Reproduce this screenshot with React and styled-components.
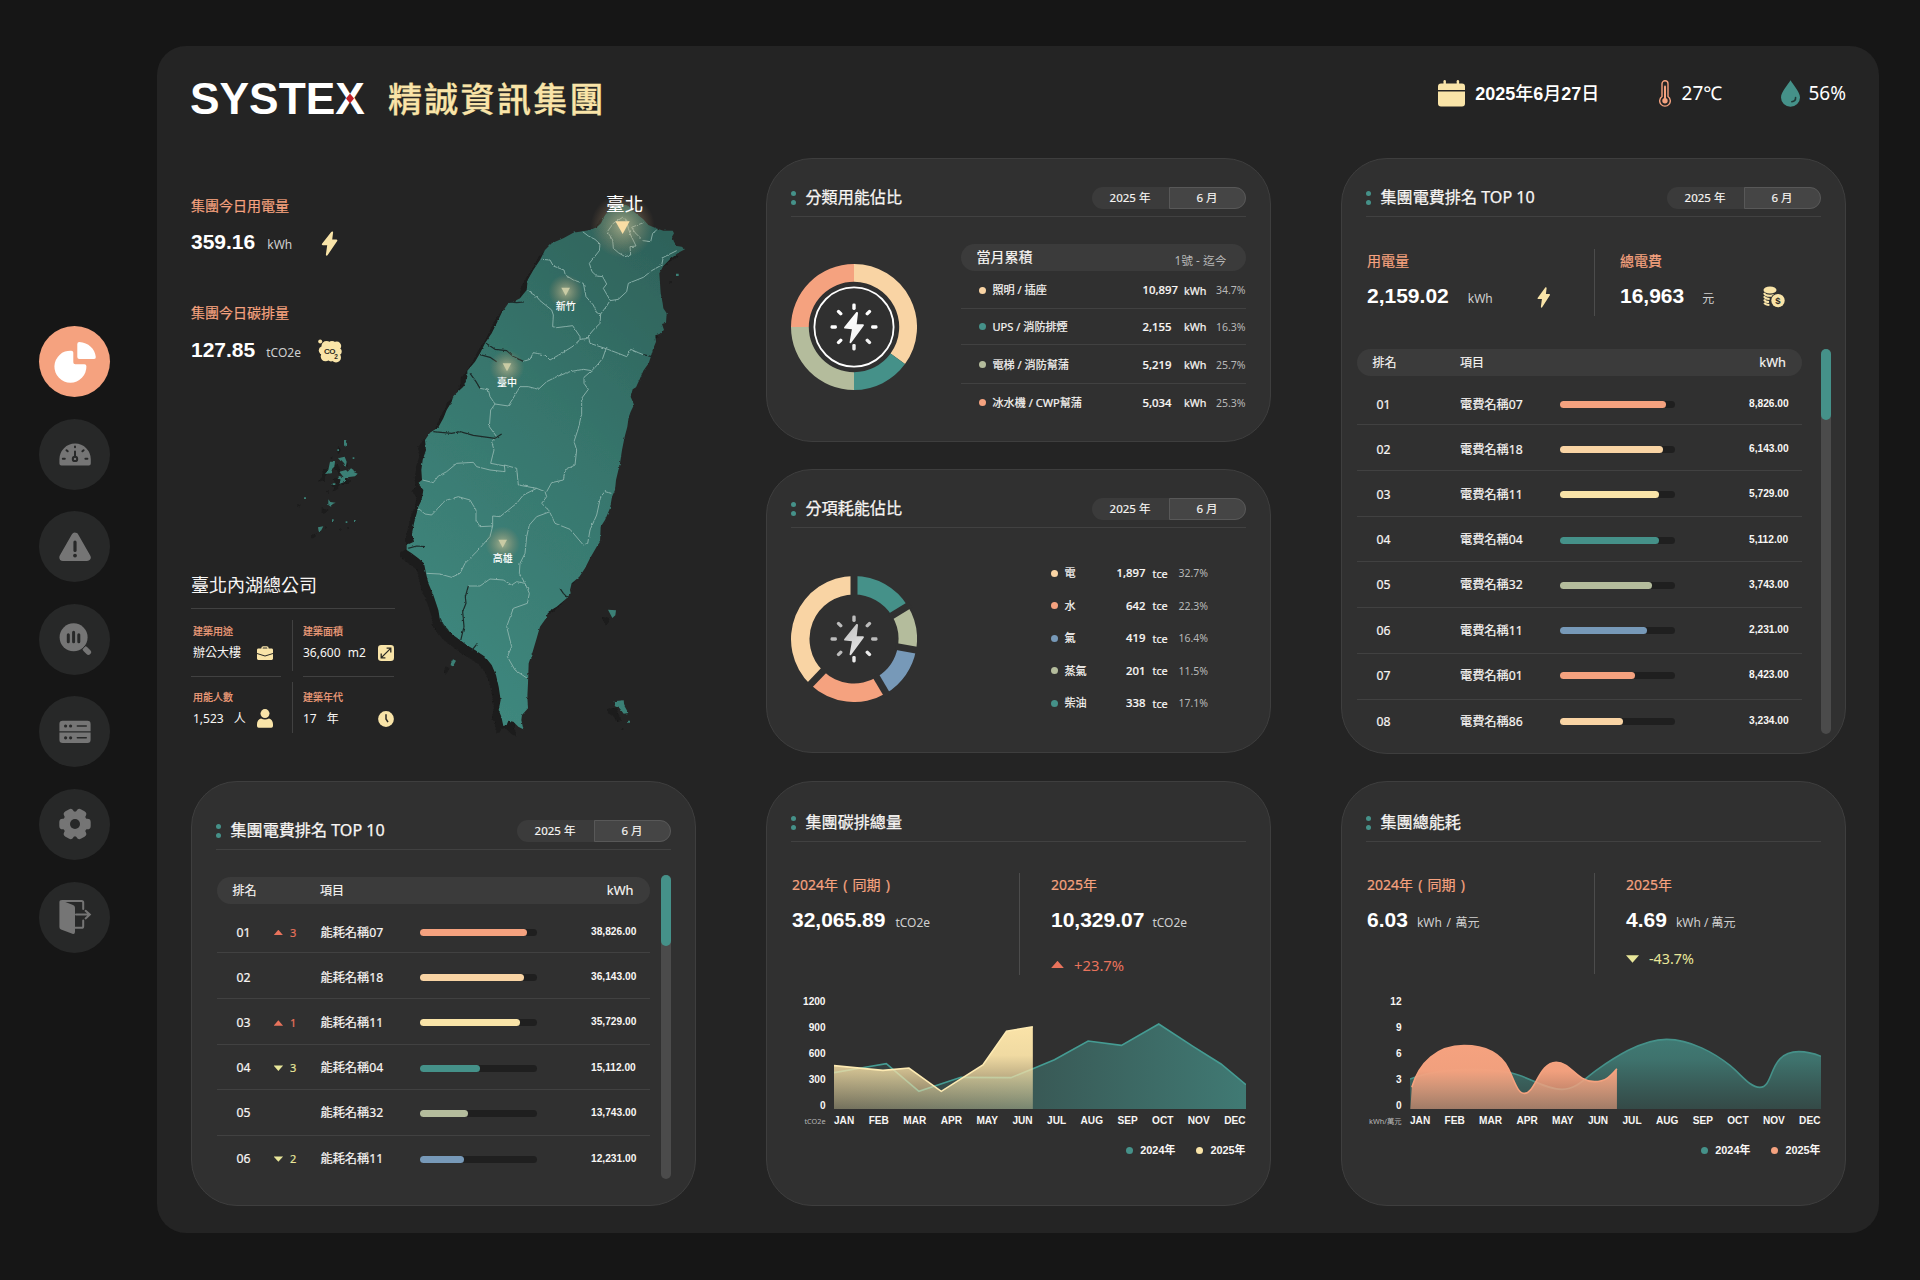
import React from "react";
import styled, { createGlobalStyle } from "styled-components";

const C = {
  page: "#161616",
  panel: "#242424",
  card: "#303030",
  line: "#414141",
  pill: "#3b3b3b",
  text: "#f8f6f4",
  dim: "#b8b8b8",
  salmon: "#f5a27f",
  peach: "#f9d4a4",
  cream: "#f9e4a8",
  teal: "#459189",
  sage: "#b4bc9c",
  blue: "#7799b8",
  red: "#e8735c",
  lime: "#e9e79a",
};

const sans = `"Noto Sans", "Noto Sans CJK TC", sans-serif`;
const arial = `"Liberation Sans", "Noto Sans CJK TC", sans-serif`;

const GlobalStyle = createGlobalStyle`
  *, *::before, *::after { box-sizing: border-box; }
  body { margin: 0; background: ${C.page}; color: ${C.text}; font-family: ${sans}; }
  svg { display: block; flex: none; }
`;

/* ---------- shell ---------- */
const Page = styled.div`
  width: 1920px;
  height: 1280px;
  display: flex;
  overflow: hidden;
  background: ${C.page};
`;
const Sidebar = styled.nav`
  width: 157px;
  padding: 326px 0 0 39.300px;
  display: flex;
  flex-direction: column;
  gap: 21.6px;
`;
const NavButton = styled.button`
  width: 71px;
  height: 71px;
  flex: none;
  padding: 0;
  border: 0;
  border-radius: 50%;
  display: grid;
  place-items: center;
  color: ${(p) => (p.$active ? "#fff" : "#757575")};
  background: ${(p) => (p.$active ? C.salmon : "#272828")};
`;
const Panel = styled.main`
  width: 1722px;
  height: 1187px;
  margin-top: 46px;
  padding: 0 34px 0 34px;
  border-radius: 29px;
  background: ${C.panel};
`;
const TopBar = styled.header`
  height: 112px;
  display: flex;
  justify-content: space-between;
  align-items: flex-start;
`;
const Brand = styled.div`
  margin-top: 33px;
  height: 40px;
  display: flex;
  align-items: center;
`;
const Logo = styled.div`
  position: relative;
  font: 700 44.300px/40px ${arial};
  color: #fff;
  width: 174px;
  margin-left: -1px;
`;
const LogoMark = styled.i`
  position: absolute;
  left: 156px;
  top: 14.500px;
  width: 8px;
  height: 10px;
  background: #c22028;
  clip-path: polygon(50% 0, 100% 50%, 50% 100%, 0 50%);
`;
const Company = styled.h1`
  margin: 0 0 0 24px;
  font: 500 34px/40px ${sans};
  letter-spacing: 2.3px;
  color: ${C.cream};
  -webkit-text-stroke: 0.3px;
`;
const Status = styled.div`
  margin: 32px -1px 0 0;
  height: 30px;
  display: flex;
  gap: 59.300px;
`;
const StatusItem = styled.div`
  display: flex;
  align-items: center;
  gap: ${(p) => p.$gap || 10}px;
  font: 400 19px/30px ${sans};
  color: #fff;
`;
const DateText = styled.span`
  font: 700 18px/30px ${arial};
  width: 124px;
  padding-top: 1px;
  white-space: nowrap;
  i { font-style: normal; font-weight: 500; }
`;
const Columns = styled.div`
  display: grid;
  grid-template-columns: repeat(3, 505px);
  column-gap: 70px;
`;
const Column = styled.div`
  display: flex;
  flex-direction: column;
`;

/* ---------- overview ---------- */
const Hero = styled.section`
  height: 596px;
  margin-bottom: 27px;
  display: grid;
  > * { grid-area: 1 / 1; }
`;
const HeroInfo = styled.div`
  position: relative;
  padding: 38px 0 21.500px;
  display: flex;
  flex-direction: column;
  width: 204px;
`;
const Metric = styled.div`
  margin-bottom: 48px;
`;
const Label = styled.div`
  font: 400 14px/20px ${sans};
  -webkit-text-stroke: 0.2px;
  color: ${C.salmon};
  white-space: nowrap;
`;
const ValueRow = styled.div`
  height: 24px;
  margin-top: ${(p) => p.$mt || 14}px;
  display: flex;
  align-items: center;
`;
const Reading = styled.div`
  display: flex;
  align-items: baseline;
  gap: ${(p) => p.$gap || 9}px;
  width: ${(p) => (p.$w ? p.$w + "px" : "auto")};
  margin-top: -1px;
  white-space: nowrap;
  b { font: 700 21px/24px ${arial}; color: #fff; }
  span { font: 400 12px/20px ${sans}; color: #cfcfcf; }
`;
const Site = styled.div`
  margin-top: auto;
  width: 204px;
`;
const SiteName = styled.h2`
  margin: 0;
  padding-bottom: 11px;
  border-bottom: 1px solid ${C.line};
  font: 400 18px/24px ${sans};
  color: ${C.text};
`;
const SiteGrid = styled.div`
  margin-top: 11px;
  display: grid;
  grid-template-columns: 90px 1px 91px;
  grid-template-rows: 51px 1px 51px;
  column-gap: 10.5px;
  row-gap: 5px;
`;
const Rule = styled.i`
  background: ${C.line};
`;
const Fact = styled.div`
  padding: ${(p) => (p.$low ? 8 : 4)}px ${(p) => (p.$end ? 0 : 8)}px 0 ${(p) => (p.$end ? 0 : 2)}px;
  h3 { margin: 0 0 5px; font: 400 10px/14px ${sans}; color: ${C.salmon}; -webkit-text-stroke: 0.2px; }
  p { margin: 0; height: 20px; display: flex; align-items: center; justify-content: space-between;
      font: 400 12px/20px ${sans}; word-spacing: ${(p) => p.$ws || 4}px; white-space: nowrap; }
`;

/* ---------- cards ---------- */
const Card = styled.section`
  height: ${(p) => p.$h}px;
  margin-bottom: ${(p) => p.$mb || 0}px;
  padding: ${(p) => p.$pt}px 24.500px 0 24px;
  border: 1px solid #3e3e3e;
  border-radius: 46px;
  background: ${C.card};
`;
const CardHead = styled.header`
  height: 37px;
  display: flex;
  align-items: center;
  border-bottom: 1px solid ${C.line};
`;
const Marks = styled.i`
  width: 5px;
  display: grid;
  gap: 3.4px;
  margin-right: 9.5px;
  &::before, &::after { content: ""; height: 5px; border-radius: 50%; background: ${C.teal}; }
`;
const Title = styled.h2`
  margin: 0;
  flex: 1;
  padding-bottom: 2px;
  font: 400 16.1px/24px ${sans};
  -webkit-text-stroke: 0.25px;
  color: ${C.text};
`;
const Tabs = styled.div`
  display: flex;
  height: 22px;
  width: 154px;
  margin-bottom: 1px;
  border-radius: 11px;
  background: ${C.pill};
  -webkit-text-stroke: 0.15px;
`;
const Tab = styled.span`
  flex: 1;
  text-align: center;
  font: 400 11.5px/20px ${sans};
  border: 1px solid ${(p) => (p.$on ? "#585858" : "transparent")};
  background: ${(p) => (p.$on ? "#454545" : "transparent")};
  border-radius: ${(p) => (p.$on ? "0 11px 11px 0" : "0")};
`;
const Split = styled.div`
  display: flex;
  justify-content: space-between;
`;
const RingBox = styled.div`
  margin-top: ${(p) => p.$mt}px;
`;
const Dot = styled.i`
  display: block;
  width: 7px;
  height: 7px;
  border-radius: 50%;
  background: ${(p) => p.$c};
`;
const UsageList = styled.div`
  margin-top: 27px;
  width: 285px;
`;
const UsageHead = styled.div`
  height: 27px;
  padding: 0 19px 0 16px;
  border-radius: 14px;
  background: ${C.pill};
  display: flex;
  justify-content: space-between;
  font: 400 14px/26px ${sans};
  -webkit-text-stroke: 0.2px;
  small { font: 400 11.8px/33px ${sans}; color: ${C.dim}; -webkit-text-stroke: 0; }
`;
const UsageRow = styled.div`
  height: ${(p) => p.$h}px;
  padding: ${(p) => (p.$h > 37 ? 1 : 0)}px 0 0 18px;
  display: grid;
  grid-template-columns: 14px 150px 41.5px 32px auto;
  align-items: center;
  font: 400 11.1px/16px ${sans};
  -webkit-text-stroke: 0.2px;
  white-space: nowrap;
  border-bottom: 1px solid ${C.line};
  &:last-child { border: 0; padding: 0 0 1px 18px; }
`;
const Num = styled.b`
  font-weight: 500;
  font-size: 11.3px;
`;
const Unit = styled.span`
  padding-top: 1px;
  font-size: 10.8px;
`;
const Pct = styled.span`
  font-size: 10.5px;
  font-weight: 400;
  color: ${C.dim};
  -webkit-text-stroke: 0;
`;
const FuelList = styled.div`
  margin: 29px 37px 0 0;
`;
const FuelRow = styled.div`
  height: 32.5px;
  display: grid;
  grid-template-columns: 14px 40px 41px 33px 30px;
  align-items: center;
  font: 400 11.1px/16px ${sans};
  -webkit-text-stroke: 0.2px;
  white-space: nowrap;
  ${Num} { text-align: right; }
  ${Unit} { padding-left: 7px; }
`;

/* ---------- stats ---------- */
const Stats = styled.div`
  display: grid;
  grid-template-columns: 228px 1fr;
  height: ${(p) => p.$h}px;
  margin-top: ${(p) => p.$mt}px;
`;
const Stat = styled.div`
  padding: 2px 0 0 ${(p) => p.$pl || 1}px;
  word-spacing: ${(p) => p.$ws || 0}px;
  border-left: ${(p) => (p.$pl ? `1px solid #4c4c4c` : "0")};
`;
const Change = styled.div`
  margin-top: ${(p) => p.$mt}px;
  display: flex;
  align-items: center;
  gap: 10px;
  color: ${(p) => p.$c};
  font: 400 ${(p) => p.$fs || 14.8}px/20px ${sans};
`;
const Arrow = styled.i`
  display: block;
  width: ${(p) => p.$w}px;
  height: ${(p) => p.$w * 0.57}px;
  background: currentColor;
  clip-path: ${(p) => (p.$down ? "polygon(0 0, 100% 0, 50% 100%)" : "polygon(50% 0, 100% 100%, 0 100%)")};
`;

/* ---------- ranking ---------- */
const Ranking = styled.div`
  display: flex;
  justify-content: space-between;
  width: ${(p) => p.$w}px;
  margin: ${(p) => p.$mt}px 0 0 ${(p) => p.$ml}px;
`;
const Table = styled.div`
  width: ${(p) => p.$w}px;
  margin-top: ${(p) => p.$mt || 0}px;
`;
const TableHead = styled.div`
  height: 27px;
  padding-right: 16px;
  border-radius: 14px;
  background: ${C.pill};
  display: grid;
  grid-template-columns: 15.5px 87.5px 1fr auto;
  font: 400 12px/27px ${sans};
  -webkit-text-stroke: 0.15px;
  span { grid-column-start: 2; }
  span ~ span { grid-column-start: auto; }
  em { font-style: normal; font-size: 12.8px; font-weight: 400; }
`;
const TableRow = styled.div`
  height: ${(p) => (p.$i ? 45.8 : 49)}px;
  padding-top: ${(p) => (p.$i ? Math.max(0, 6 - 1.2 * p.$i) : 9)}px;
  padding-bottom: ${(p) => (p.$i > 5 ? 1.5 : 0)}px;
  display: grid;
  grid-template-columns: ${(p) => p.$cols};
  align-items: center;
  border-bottom: 1px solid ${C.line};
  font: 400 12.2px/18px ${sans};
  -webkit-text-stroke: 0.2px;
  white-space: nowrap;
  &:last-child { border: 0; }
`;
const Rank = styled.span`
  padding-left: 19.5px;
`;
const Trend = styled.span`
  display: flex;
  align-items: center;
  gap: 7px;
  font: 400 11px/14px ${sans};
  color: ${(p) => (p.$down ? C.lime : C.red)};
`;
const Track = styled.div`
  width: ${(p) => p.$w}px;
  height: 7px;
  border-radius: 4px;
  background: #1f1f1f;
`;
const Fill = styled.div`
  height: 7px;
  border-radius: 4px;
  background: ${(p) => p.$c};
`;
const Amount = styled.b`
  margin-top: -1px;
  font: 700 10.2px/16px ${arial};
  -webkit-text-stroke: 0;
`;
const Scroll = styled.div`
  width: 10px;
  height: ${(p) => p.$h}px;
  border-radius: 5px;
  background: #4b4b4b;
  &::before { content: ""; display: block; height: 71px; border-radius: 5px; background: ${C.teal}; }
`;

/* ---------- charts ---------- */
const ChartGrid = styled.div`
  margin-top: 23px;
  display: grid;
  grid-template-columns: ${(p) => p.$axis}px 1fr;
  grid-template-rows: 114px 16px;
  column-gap: 8px;
  font: 700 10.1px/10px ${arial};
`;
const Axis = styled.div`
  display: flex;
  flex-direction: column;
  justify-content: space-between;
  text-align: right;
`;
const Plot = styled.svg`
  width: 100%;
  height: 110px;
  margin-top: 2px;
`;
const AxisUnit = styled.div`
  padding-top: 4px;
  text-align: right;
  font: 400 7.3px/12px ${sans};
  white-space: nowrap;
  color: ${C.dim};
`;
const Months = styled.div`
  padding: 4px 0 0 0.500px;
  display: flex;
  justify-content: space-between;
  line-height: 12px;
`;
const Legend = styled.div`
  margin-top: 16px;
  display: flex;
  justify-content: flex-end;
  gap: 21px;
  font: 700 10.9px/14px ${arial};
  span { display: flex; align-items: center; gap: 7px; }
`;

/* ---------- icons ---------- */
const NavSvg = ({ children }) => (
  <svg width="48" height="48" viewBox="0 0 48 48" fill="currentColor">{children}</svg>
);
const hole = "#272828";
const navIcons = [
  <NavSvg key="pie">
    <path d="M20.3 12.7A16 16 0 1 0 35.4 28.2a2 2 0 0 0-2-2H24.3a2 2 0 0 1-2-2V14.6a2 2 0 0 0-2-1.9z" />
    <path d="M28.3 4C37.5 4.4 44 11 44.8 19a1.8 1.8 0 0 1-1.8 2H28.3a2 2 0 0 1-2-2V6a2 2 0 0 1 2-2z" />
  </NavSvg>,
  <NavSvg key="gauge">
    <path d="M8.4 33.4V29.3A15.7 15.7 0 0 1 39.8 29.3v4.1a2 2 0 0 1-2 2H10.4a2 2 0 0 1-2-2z" />
    <g stroke={hole} strokeWidth="2" strokeLinecap="round" fill="none">
      <path d="M24 21.5v5M24 16.6v.6M11.8 28.8h2M34.4 28.8h2M15.5 20.2l1.2 1.1M32.6 20.2l-1.2 1.1" />
      <circle cx="24" cy="28.9" r="2.2" />
    </g>
  </NavSvg>,
  <NavSvg key="warn">
    <path d="M24 13.3 36 34.3H12z" stroke="currentColor" strokeWidth="7.4" strokeLinejoin="round" />
    <path d="M24 19v8.4" stroke={hole} strokeWidth="3.2" strokeLinecap="round" />
    <circle cx="24" cy="32.6" r="1.9" fill={hole} />
  </NavSvg>,
  <NavSvg key="search">
    <circle cx="22.6" cy="22.3" r="14" />
    <path d="M34.4 34.2l3 3" stroke="currentColor" strokeWidth="5.4" strokeLinecap="round" />
    <path d="M34.6 30.4l-3.6 4" stroke={hole} strokeWidth="1" />
    <path d="M17.3 19.8v7M22.6 17.2v9.6M27.8 19.8v7" stroke={hole} strokeWidth="3" strokeLinecap="round" />
  </NavSvg>,
  <NavSvg key="server">
    <path d="M11.6 12.7h24.8a3.2 3.2 0 0 1 3.2 3.2v7.3H8.4v-7.3a3.2 3.2 0 0 1 3.2-3.2zM8.4 24.4h31.2v7.4a3.2 3.2 0 0 1-3.2 3.2H11.6a3.2 3.2 0 0 1-3.2-3.2z" />
    <g fill={hole}>
      <circle cx="14.6" cy="18" r="1.6" /><circle cx="19.6" cy="18" r="1.6" />
      <circle cx="14.6" cy="29.8" r="1.6" /><circle cx="19.6" cy="29.8" r="1.6" />
    </g>
    <path d="M26.3 18h9M26.3 29.8h9" stroke={hole} strokeWidth="1.4" strokeLinecap="round" />
  </NavSvg>,
  <NavSvg key="gear">
    <circle cx="24" cy="24" r="12.4" />
    {[0, 60, 120].map((a) => (
      <rect key={a} x="8.3" y="18.7" width="31.4" height="10.6" rx="3.4" transform={`rotate(${a} 24 24)`} />
    ))}
    <circle cx="24" cy="24" r="5" fill={hole} />
  </NavSvg>,
  <NavSvg key="door">
    <path d="M10.6 7.6 22 12a3 3 0 0 1 2 2.8V39a2 2 0 0 1-2.6 1.8L10 36.4A2.4 2.4 0 0 1 8.4 34V9a1.6 1.6 0 0 1 2.2-1.4z" />
    <path d="M11 8h19.6a1.6 1.6 0 0 1 1.6 1.6V16M24 34.8h6.6a1.6 1.6 0 0 0 1.6-1.6V27.6M25 21.6h13.4M34.6 17.8l4.2 3.8-4.2 3.8" fill="none" stroke="currentColor" strokeWidth="2" strokeLinecap="round" />
  </NavSvg>,
];

const Bolt = ({ w, h }) => (
  <svg width={w} height={h} viewBox="0 0 17 25" preserveAspectRatio="none">
    <path d="M10.200.9 1 12.800a1 1 0 0 0 .8 1.500h4.400L4.900 23.600c-.1 1 1 1.400 1.600.6L16.200 9.900c.4-.7 0-1.500-.8-1.500h-4.200L12.100 1.500C12.300.3 10.900 0 10.200.9z" fill={C.cream} />
  </svg>
);
const Co2 = () => (
  <svg width="24" height="24" viewBox="0 0 24 24">
    <g fill={C.cream}>
      <circle cx="2.200" cy="2.600" r="2" />
      <circle cx="8.500" cy="7" r="5" /><circle cx="14" cy="6" r="4" /><circle cx="18.800" cy="7" r="4.400" />
      <circle cx="5" cy="11.500" r="4.200" /><circle cx="7.500" cy="17.500" r="4.800" /><circle cx="13" cy="18" r="4.400" />
      <circle cx="18" cy="18.500" r="5" /><circle cx="20.200" cy="12.500" r="3.500" /><rect x="5" y="6" width="14" height="13" />
    </g>
    <text x="6" y="14.800" fontFamily="Liberation Sans, sans-serif" fontWeight="700" fontSize="8" fill="#2e2b22" textLength="11.500">CO</text>
    <text x="16.200" y="19.500" fontFamily="Liberation Sans, sans-serif" fontWeight="700" fontSize="6.500" fill="#2e2b22">2</text>
  </svg>
);
const Coins = () => (
  <svg width="22" height="22" viewBox="0 0 22 22">
    <ellipse cx="7" cy="4" rx="6.500" ry="3.600" fill={C.cream} />
    <g fill="none" stroke={C.cream} strokeWidth="2">
      <path d="M1 7c.8 1.800 3.400 2.800 6 2.800 1.600 0 3-.3 4-.8M1 10.200c.8 1.700 3 2.700 5.600 2.700M1 13.500c.8 1.600 2.600 2.500 5 2.600M1.200 16.800c1 1.500 2.800 2.200 5.200 2.300" />
    </g>
    <circle cx="15" cy="14.600" r="7.600" fill={C.card} />
    <circle cx="15" cy="14.600" r="6.700" fill={C.cream} />
    <text x="15" y="18" textAnchor="middle" fontFamily="Liberation Sans, sans-serif" fontWeight="700" fontSize="9.500" fill="#2e2b22">$</text>
  </svg>
);
const Calendar = () => (
  <svg width="27" height="27" viewBox="0 0 27 27" fill={C.cream}>
    <rect x="5.500" y="0" width="2.400" height="6" rx="1.200" /><rect x="18.700" y="0" width="2.400" height="6" rx="1.200" />
    <path d="M3 3.600h21a3 3 0 0 1 3 3V10H0V6.600a3 3 0 0 1 3-3zM0 11.600h27v12a3 3 0 0 1-3 3H3a3 3 0 0 1-3-3z" />
  </svg>
);
const Thermometer = () => (
  <svg width="12" height="27" viewBox="0 0 12 27" fill="none" stroke={C.salmon}>
    <path d="M3 16.500V3.800a3 3 0 0 1 6 0v12.700a5.300 5.300 0 1 1-6 0z" strokeWidth="1.400" />
    <path d="M6 6.500V20" strokeWidth="2" strokeLinecap="round" />
    <circle cx="6" cy="20.800" r="2.700" fill={C.salmon} stroke="none" />
  </svg>
);
const Drop = () => (
  <svg width="19" height="27" viewBox="0 0 19 27">
    <path d="M9.500.3C12.500 5.500 19 12 19 17.500a9.500 9.200 0 0 1-19 0C0 12 6.500 5.500 9.500.3z" fill={C.teal} />
    <path d="M14.600 17.500c.1 2.400-1.400 4-3.800 4.200" fill="none" stroke="#1f3a37" strokeWidth="1.600" strokeLinecap="round" />
  </svg>
);
const Briefcase = () => (
  <svg width="16" height="14" viewBox="0 0 16 14">
    <path d="M5 3V1.900C5 1.200 5.500.8 6.200.8h3.600c.7 0 1.200.4 1.200 1.100V3" fill="none" stroke={C.cream} strokeWidth="1.300" />
    <path d="M1.400 2.600h13.200c.8 0 1.400.6 1.400 1.300v3L8 9.500 0 6.900v-3c0-.7.600-1.300 1.400-1.300zM0 8l8 2.600L16 8v4.600c0 .7-.6 1.300-1.400 1.300H1.400C.6 13.900 0 13.300 0 12.600z" fill={C.cream} />
  </svg>
);
const Expand = () => (
  <svg width="16" height="16" viewBox="0 0 16 16">
    <rect width="16" height="16" rx="3.200" fill={C.cream} />
    <path d="M3.600 12.400l8.800-8.800M8.600 3.200h4.200v4.200M3.200 8.600v4.200h4.200" fill="none" stroke="#2c2a24" strokeWidth="1.300" />
  </svg>
);
const Person = () => (
  <svg width="16" height="19" viewBox="0 0 16 19" fill={C.cream}>
    <circle cx="8" cy="4.600" r="4.500" />
    <path d="M4 9.500c2.500 1.300 5.500 1.300 8 0 2.500.7 4 3 4 5.700V17a1.700 1.700 0 0 1-1.700 1.700H1.700A1.700 1.700 0 0 1 0 17v-1.800c0-2.700 1.500-5 4-5.700z" />
  </svg>
);
const Clock = () => (
  <svg width="16" height="16" viewBox="0 0 16 16">
    <circle cx="8" cy="8" r="7.900" fill={C.cream} />
    <path d="M8 3.300V8l2 3.200" fill="none" stroke="#2c2a24" strokeWidth="1.500" />
  </svg>
);

/* ---------- rings ---------- */
const pt = (r, deg) => {
  const a = ((deg - 90) * Math.PI) / 180;
  return [63 + r * Math.cos(a), 63 + r * Math.sin(a)];
};
const sector = (from, to, r0, r1) => {
  const big = to - from > 180 ? 1 : 0;
  const [a, b, c, d] = [pt(r1, from), pt(r1, to), pt(r0, to), pt(r0, from)];
  return `M${a} A${r1} ${r1} 0 ${big} 1 ${b} L${c} A${r0} ${r0} 0 ${big} 0 ${d}Z`;
};
const Spark = ({ id, from, to }) => (
  <g>
    <defs>
      <linearGradient id={id} gradientUnits="userSpaceOnUse" x1="52" y1="45" x2="74" y2="80">
        <stop offset="0" stopColor={from} /><stop offset="1" stopColor={to} />
      </linearGradient>
    </defs>
    {[0, 45, 90, 135, 180, 225, 270, 315].map((d) => (
      <rect key={d} x="61.300" y="39.500" width="3.400" height="6.400" rx="1.400" fill={d > 100 && d < 200 ? to : from} transform={`rotate(${d} 63 63)`} />
    ))}
    <path d="M65 48.500 53.300 63c-.5.700-.2 1.500.6 1.600l7 .6-2.300 13.100c-.1 1 1 1.300 1.600.5l12.500-17c.5-.7.200-1.500-.7-1.500h-6.300l1.300-11.100c.1-1.200-1.400-1.600-2-.7z" fill={`url(#${id})`} />
  </g>
);
const UsageRing = () => (
  <svg width="126" height="126" viewBox="0 0 126 126">
    <path d={sector(0, 126, 45.200, 63)} fill={C.peach} />
    <path d={sector(126, 180, 45.200, 63)} fill={C.teal} />
    <path d={sector(180, 270, 45.200, 63)} fill={C.sage} />
    <path d={sector(270, 360, 45.200, 63)} fill={C.salmon} />
    <circle cx="63" cy="63" r="39.600" fill="none" stroke="#fff" strokeWidth="1.800" />
    <Spark id="sparkA" from="#ffffff" to="#f2f2f2" />
  </svg>
);
const fuelCuts = [0, 58.500, 100.100, 149.400, 223.900];
const fuelFills = [C.teal, C.sage, C.blue, C.salmon, C.peach];
const FuelRing = () => (
  <svg width="126" height="126" viewBox="0 0 126 126">
    {fuelCuts.map((a, i) => (
      <path key={a} d={sector(a, fuelCuts[i + 1] || 360, 44.500, 63)} fill={fuelFills[i]} />
    ))}
    {fuelCuts.map((a) => (
      <path key={a} d={`M${pt(42, a)} L${pt(66, a)}`} stroke={C.card} strokeWidth="7" />
    ))}
    <Spark id="sparkB" from="#bcbcbc" to="#ececec" />
  </svg>
);

/* ---------- island map ---------- */
const mainland =
  "M663,130 672,110 685,92 705,78 725,70 745,78 765,98 790,118 805,135 828,145 850,152 878,152 882,160 876,170 882,185 890,198 905,200 915,208 895,218 870,238 850,258 838,280 840,310 842,340 848,370 850,385 860,400 858,428 846,432 852,450 838,462 826,466 828,485 818,510 812,532 806,550 790,572 778,600 768,622 758,628 752,650 762,674 752,695 746,712 742,740 734,770 726,810 720,850 708,900 705,930 696,950 690,985 675,1020 662,1040 660,1085 650,1100 630,1135 615,1165 598,1190 575,1210 570,1230 572,1240 560,1255 530,1280 505,1295 498,1315 480,1340 470,1375 458,1415 446,1450 444,1510 442,1550 444,1585 426,1605 424,1620 430,1648 415,1640 400,1625 385,1622 380,1635 370,1638 364,1610 356,1590 362,1560 356,1520 348,1485 335,1455 315,1430 285,1410 260,1395 240,1380 215,1362 195,1340 180,1320 175,1290 160,1245 145,1210 138,1180 132,1150 115,1135 95,1120 80,1110 80,1095 102,1085 96,1060 102,1030 110,1000 115,980 125,960 130,930 114,910 126,900 124,870 128,840 138,810 135,780 150,758 175,742 190,715 200,690 215,665 220,648 250,620 262,590 262,572 285,545 300,520 315,490 335,460 350,430 365,398 385,370 400,365 420,355 440,330 443,300 460,270 480,240 495,210 515,190 550,175 580,158 608,154 630,150 650,142Z";
const islets =
  "M-108,784l6,-4 4,8 -6,12 -4,-4zM-150,845l15,0 -2,15 -8,8 0,12 -20,2 10,-12zM-126,835l20,-5 6,15 -3,17 -5,-14 -10,-5zM-122,875l20,-5 5,5 10,-10 8,5 0,6 12,5 -8,8 -18,2 -12,4 0,10 -17,7 5,-12 -10,-6 4,-6 14,4zM-155,958l6,8 16,2 -9,4 -5,8 -8,-5zM-186,1042l16,-3 -7,13 -7,2zM-228,952h6v5h-6zM-144,1018h5v5h-5zM-103,1024h5v5h-5zM-78,1020h5v6h-5zM-128,808h5v5h-5zM-82,832h5v5h-5zM-142,910h8v5h-8zM213,1450l6,-12 9,4 -9,17 -7,-3zM684,1289l24,2 -2,15 -9,8zM701,1564l30,-3 2,16 12,22 -14,2 -12,-16 -14,-6zM744,1622h6v6h-6zM888,281h8v7h-8z";
const lightBorders = [
  "M608,155 625,168 645,178 660,192 658,212 640,235 628,250 636,275 650,288 668,290 680,312 670,325 690,360",
  "M890,212 850,232 845,255 815,272 790,292 745,310 740,335 715,358 690,362 680,378 662,402",
  "M485,238 510,240 520,258 552,270 556,285 580,300 610,310 618,350 640,375 650,398 662,402 660,430 640,450 625,468 620,476 600,478",
  "M443,332 470,350 480,362 515,390 520,405 518,440 530,443 578,437 600,470 600,478 580,498 545,520 510,540 495,525 460,518 450,538 430,544",
  "M625,468 630,490 678,506 715,520 740,530 752,508 775,518 790,524",
  "M678,506 668,535 652,555 635,572 610,568 570,575 530,590 500,605 475,628 445,620 420,620 405,645 385,678 345,672 330,650 325,630 300,625",
  "M635,572 612,592 612,610 625,628 605,655 605,700 595,745 582,785 590,810 585,855 555,870 550,900 515,908 500,935",
  "M345,672 332,690 328,740 350,770 335,785 342,810 332,850 375,858",
  "M728,112 740,120 745,145 752,165 768,198 750,200 752,225 735,230 715,218 700,205 698,180 682,155 700,130Z",
  "M790,128 755,142 765,158 790,182 812,185 818,160 830,150",
  "M128,900 160,908 175,888 200,875 230,850 280,847 290,860 330,870 375,875 373,855 410,865 415,915 470,925 495,935 500,950 485,970 510,995 470,1010 448,1035 440,1070 435,1120 420,1150 418,1180 435,1210",
  "M470,925 430,945 410,970 360,1010 338,1008 338,1038 300,1040 288,1020 288,990 270,960 235,950 195,962 155,1005 135,1002 115,985",
  "M338,1038 330,1070 290,1115 255,1150 240,1180 215,1192 180,1182 140,1180",
  "M510,998 525,1030 570,1048 610,1095 623,1090 630,1050 650,1005 662,950 675,935 694,940",
  "M435,1210 410,1205 395,1215 370,1200 330,1197 300,1218 265,1218",
  "M435,1210 448,1240 442,1270 400,1285 380,1340 395,1400 382,1430 405,1470 442,1495",
].join("");
const darkBorders =
  "M318,490 345,508 380,512 400,530 430,544M300,524 330,532 350,545M790,524 815,530M300,625 288,605 270,580M160,755 215,760 240,755 280,766 345,775 365,762M265,1218 256,1250 258,1270 248,1295 252,1340 242,1382M84,1105 110,1098 135,1100M540,1225 550,1240 562,1252M180,1315 190,1335 205,1352M275,1412 292,1390M386,366 410,368 432,366";
const pins = [
  { name: "新竹", x: 557, y: 335 },
  { name: "臺中", x: 381, y: 562 },
  { name: "高雄", x: 368, y: 1091 },
];
const IslandMap = () => (
  <svg width="506" height="596" viewBox="-567 -66 1518 1788">
    <defs>
      <linearGradient id="land" x1="0.800" y1="0" x2="0.300" y2="1">
        <stop offset="0" stopColor="#2e625a" /><stop offset="0.450" stopColor="#37766d" /><stop offset="1" stopColor="#3f887e" />
      </linearGradient>
      <radialGradient id="glow">
        <stop offset="0" stopColor="#e6d4a2" stopOpacity="0.600" /><stop offset="0.450" stopColor="#c8b084" stopOpacity="0.360" /><stop offset="1" stopColor="#b98a62" stopOpacity="0" />
      </radialGradient>
      <filter id="coast" x="-5%" y="-5%" width="110%" height="110%">
        <feTurbulence type="fractalNoise" baseFrequency="0.100" numOctaves="2" seed="4" />
        <feDisplacementMap in="SourceGraphic" scale="7" xChannelSelector="R" yChannelSelector="G" />
      </filter>
    </defs>
    <g filter="url(#coast)">
      <g fill="#1b1b1b" transform="translate(-20 22)"><path d={mainland} /><path d={islets} /></g>
      <path d={mainland} fill="url(#land)" />
      <path d={islets} fill="#3b8076" />
      <g fill="none" strokeLinejoin="round">
        <path d={lightBorders} stroke="#93b9b1" strokeOpacity="0.850" strokeWidth="3" />
        <path d={darkBorders} stroke="#1d2b29" strokeWidth="3.600" />
      </g>
    </g>
    <circle cx="728" cy="138" r="96" fill="url(#glow)" />
    <path d="M706,124H749L728,162Z" fill="#f9dda4" />
    <text x="734" y="92" textAnchor="middle" fontSize="56" fontFamily="Noto Sans CJK TC, sans-serif" fill="#fff">臺北</text>
    {pins.map((p) => (
      <g key={p.name}>
        <circle cx={p.x} cy={p.y} r="52" fill="url(#glow)" />
        <path d={`M${p.x - 13},${p.y - 12}h26l-13,24z`} fill="#c9cba4" />
        <text x={p.x} y={p.y + 56} textAnchor="middle" fontSize="30" fontWeight="500" fontFamily="Noto Sans CJK TC, sans-serif" fill="#fff">{p.name}</text>
      </g>
    ))}
  </svg>
);

/* ---------- data ---------- */
const usage = [
  ["照明 / 插座", "10,897", "34.7%", C.peach, 38],
  ["UPS / 消防排煙", "2,155", "16.3%", C.teal, 36],
  ["電梯 / 消防幫蒲", "5,219", "25.7%", C.sage, 39],
  ["冰水機 / CWP幫蒲", "5,034", "25.3%", C.salmon, 38],
];
const fuels = [
  ["電", "1,897", "32.7%", C.peach],
  ["水", "642", "22.3%", C.salmon],
  ["氣", "419", "16.4%", C.blue],
  ["蒸氣", "201", "11.5%", C.sage],
  ["柴油", "338", "17.1%", C.teal],
];
const bills = [
  ["電費名稱07", 106, C.salmon, "8,826.00"],
  ["電費名稱18", 103, C.peach, "6,143.00"],
  ["電費名稱11", 99, C.cream, "5,729.00"],
  ["電費名稱04", 99, C.teal, "5,112.00"],
  ["電費名稱32", 92, C.sage, "3,743.00"],
  ["電費名稱11", 87, C.blue, "2,231.00"],
  ["電費名稱01", 75, C.salmon, "8,423.00"],
  ["電費名稱86", 63, C.peach, "3,234.00"],
];
const energy = [
  ["能耗名稱07", 107, C.salmon, "38,826.00", 3],
  ["能耗名稱18", 104, C.peach, "36,143.00", 0],
  ["能耗名稱11", 100, C.cream, "35,729.00", 1],
  ["能耗名稱04", 60, C.teal, "15,112.00", -3],
  ["能耗名稱32", 48, C.sage, "13,743.00", 0],
  ["能耗名稱11", 44, C.blue, "12,231.00", -2],
];
const months = ["JAN", "FEB", "MAR", "APR", "MAY", "JUN", "JUL", "AUG", "SEP", "OCT", "NOV", "DEC"];

/* ---------- composed parts ---------- */
const Head = ({ title, tabs }) => (
  <CardHead>
    <Marks />
    <Title>{title}</Title>
    {tabs && <Tabs><Tab>2025 年</Tab><Tab $on>6 月</Tab></Tabs>}
  </CardHead>
);
const RankTable = ({ rows, width, mt, cols, track, trend }) => (
  <Table $w={width} $mt={mt}>
    <TableHead><span>排名</span><span>項目</span><em>kWh</em></TableHead>
    {rows.map(([name, w, color, amount, move], i) => (
      <TableRow key={i} $i={i} $cols={cols}>
        <Rank>{String(i + 1).padStart(2, "0")}</Rank>
        {trend && (
          <Trend $down={move < 0}>
            {move !== 0 && <><Arrow $w={9.5} $down={move < 0} />{Math.abs(move)}</>}
          </Trend>
        )}
        <span>{name}</span>
        <Track $w={track}><Fill $c={color} style={{ width: w }} /></Track>
        <Amount>{amount}</Amount>
      </TableRow>
    ))}
  </Table>
);
const Chart = ({ axis, ticks, unit, color, children }) => (
  <>
    <ChartGrid $axis={axis}>
      <Axis>{ticks.map((t) => <span key={t}>{t}</span>)}</Axis>
      {children}
      <AxisUnit>{unit}</AxisUnit>
      <Months>{months.map((m) => <span key={m}>{m}</span>)}</Months>
    </ChartGrid>
    <Legend>
      <span><Dot $c={C.teal} />2024年</span>
      <span><Dot $c={color} />2025年</span>
    </Legend>
  </>
);

const carbon24 = "M219,911 300,897 376,884 474,967 600,925 750,926 816,899 881,872 982,816 1082,829 1194,765 1298,833 1381,885 1456,947";
const carbon25 = "M219,890 366,904 444,897 541,967 666,888 737,787 816,773";
const CarbonPlot = () => (
  <Plot viewBox="219 690 1237 330" preserveAspectRatio="none">
    <defs>
      <linearGradient id="c24" gradientUnits="userSpaceOnUse" x1="219" y1="0" x2="1456" y2="0">
        <stop offset="0" stopColor="#459189" stopOpacity="0.080" /><stop offset="0.480" stopColor="#459189" stopOpacity="0.420" /><stop offset="1" stopColor="#459189" stopOpacity="0.760" />
      </linearGradient>
      <linearGradient id="c25" x1="0" y1="0" x2="0" y2="1">
        <stop offset="0" stopColor="#fae3a8" /><stop offset="0.350" stopColor="#fae3a8" stopOpacity="0.950" /><stop offset="1" stopColor="#fae3a8" stopOpacity="0.330" />
      </linearGradient>
    </defs>
    <path d={`${carbon24} 1456,1020 219,1020Z`} fill="url(#c24)" />
    <path d={carbon24} fill="none" stroke="#459c93" strokeWidth="1.600" vectorEffect="non-scaling-stroke" />
    <path d={`${carbon25} 816,1020 219,1020Z`} fill="url(#c25)" />
    <path d={carbon25} fill="none" stroke="#fdeab2" strokeWidth="1.600" vectorEffect="non-scaling-stroke" />
  </Plot>
);
const total24 = "M224,930C280,905 400,890 508,912C550,920 600,961 650,961C690,961 715,927 745,904C790,870 870,811 942,811C1010,811 1080,855 1120,890C1152,918 1175,955 1203,955C1245,955 1225,848 1312,848C1340,848 1360,856 1374,862";
const total25 = "M229,955C250,880 300,830 375,830C440,830 480,858 500,900C518,940 525,973 544,973C575,973 585,880 633,880C675,880 690,938 740,938C775,938 790,915 803,899";
const TotalPlot = () => (
  <Plot viewBox="224 690 1150 330" preserveAspectRatio="none">
    <defs>
      <linearGradient id="t24" x1="0" y1="0" x2="0" y2="1">
        <stop offset="0" stopColor="#459189" stopOpacity="0.760" /><stop offset="0.300" stopColor="#459189" stopOpacity="0.680" /><stop offset="1" stopColor="#3f857c" stopOpacity="0.300" />
      </linearGradient>
      <linearGradient id="t25" x1="0" y1="0" x2="0" y2="1">
        <stop offset="0" stopColor={C.salmon} /><stop offset="0.400" stopColor={C.salmon} stopOpacity="0.980" /><stop offset="1" stopColor={C.salmon} stopOpacity="0.560" />
      </linearGradient>
    </defs>
    <path d={`${total24}V1020H224Z`} fill="url(#t24)" />
    <path d={total24} fill="none" stroke="#459189" strokeWidth="1.600" vectorEffect="non-scaling-stroke" />
    <path d={`${total25}V1020H225Z`} fill="url(#t25)" />
    <path d={total25} fill="none" stroke={C.salmon} strokeWidth="1.600" vectorEffect="non-scaling-stroke" />
  </Plot>
);

export default function App() {
  return (
    <Page>
      <GlobalStyle />
      <Sidebar>
        {navIcons.map((icon, i) => <NavButton key={i} $active={i === 0}>{icon}</NavButton>)}
      </Sidebar>
      <Panel>
        <TopBar>
          <Brand>
            <Logo>SYSTEX<LogoMark /></Logo>
            <Company>精誠資訊集團</Company>
          </Brand>
          <Status>
            <StatusItem><Calendar /><DateText>2025<i>年</i>6<i>月</i>27<i>日</i></DateText></StatusItem>
            <StatusItem $gap={11}><Thermometer />27℃</StatusItem>
            <StatusItem $gap={8}><Drop />56%</StatusItem>
          </Status>
        </TopBar>
        <Columns>
          <Column>
            <Hero>
              <IslandMap />
              <HeroInfo>
                <Metric>
                  <Label>集團今日用電量</Label>
                  <ValueRow $mt={15}><Reading $gap={12} $w={130}><b>359.16</b><span>kWh</span></Reading><Bolt w={17} h={25} /></ValueRow>
                </Metric>
                <Metric>
                  <Label>集團今日碳排量</Label>
                  <ValueRow $mt={16}><Reading $gap={11} $w={127}><b>127.85</b><span>tCO2e</span></Reading><Co2 /></ValueRow>
                </Metric>
                <Site>
                  <SiteName>臺北內湖總公司</SiteName>
                  <SiteGrid>
                    <Fact><h3>建築用途</h3><p>辦公大樓<Briefcase /></p></Fact>
                    <Rule />
                    <Fact $end><h3>建築面積</h3><p>36,600 m2<Expand /></p></Fact>
                    <Rule /><i /><Rule />
                    <Fact $low $ws={7}><h3>用能人數</h3><p>1,523 人<Person /></p></Fact>
                    <Rule />
                    <Fact $low $end $ws={7}><h3>建築年代</h3><p>17 年<Clock /></p></Fact>
                  </SiteGrid>
                </Site>
              </HeroInfo>
            </Hero>
            <Card $h={424.5} $pt={31}>
              <Head title="集團電費排名 TOP 10" tabs />
              <Ranking $w={453.5} $ml={1} $mt={25}>
                <RankTable rows={energy} width={432.5} mt={2} cols="56.6px 46.9px 99.5px 171px 1fr" track={117.5} trend />
                <Scroll $h={304} />
              </Ranking>
            </Card>
          </Column>

          <Column>
            <Card $h={284} $pt={21} $mb={27}>
              <Head title="分類用能佔比" tabs />
              <Split>
                <RingBox $mt={47}><UsageRing /></RingBox>
                <UsageList>
                  <UsageHead>當月累積<small>1號 - 迄今</small></UsageHead>
                  {usage.map(([name, n, pct, c, h]) => (
                    <UsageRow key={name} $h={h}><Dot $c={c} /><span>{name}</span><Num>{n}</Num><Unit>kWh</Unit><Pct>{pct}</Pct></UsageRow>
                  ))}
                </UsageList>
              </Split>
            </Card>
            <Card $h={284} $pt={21} $mb={28}>
              <Head title="分項耗能佔比" tabs />
              <Split>
                <RingBox $mt={48}><FuelRing /></RingBox>
                <FuelList>
                  {fuels.map(([name, n, pct, c]) => (
                    <FuelRow key={name}><Dot $c={c} /><span>{name}</span><Num>{n}</Num><Unit>tce</Unit><Pct>{pct}</Pct></FuelRow>
                  ))}
                </FuelList>
              </Split>
            </Card>
            <Card $h={424.5} $pt={23}>
              <Head title="集團碳排總量" />
              <Stats $h={101} $mt={31}>
                <Stat $ws={1.5}>
                  <Label>2024年 ( 同期 )</Label>
                  <ValueRow><Reading $gap={10}><b>32,065.89</b><span>tCO2e</span></Reading></ValueRow>
                </Stat>
                <Stat $pl={31}>
                  <Label>2025年</Label>
                  <ValueRow><Reading $gap={8}><b>10,329.07</b><span>tCO2e</span></Reading></ValueRow>
                  <Change $mt={21.500} $c={C.red}><Arrow $w={13} />+23.7%</Change>
                </Stat>
              </Stats>
              <Chart axis={34.5} ticks={[1200, 900, 600, 300, 0]} unit="tCO2e" color={C.cream}><CarbonPlot /></Chart>
            </Card>
          </Column>

          <Column>
            <Card $h={596} $pt={21} $mb={27}>
              <Head title="集團電費排名 TOP 10" tabs />
              <Stats $h={67} $mt={32}>
                <Stat>
                  <Label>用電量</Label>
                  <ValueRow><Reading $gap={19} $w={169.5}><b>2,159.02</b><span>kWh</span></Reading><Bolt w={13.5} h={21} /></ValueRow>
                </Stat>
                <Stat $pl={25}>
                  <Label>總電費</Label>
                  <ValueRow><Reading $gap={18} $w={143}><b>16,963</b><span>元</span></Reading><Coins /></ValueRow>
                </Stat>
              </Stats>
              <Ranking $w={474} $ml={-9} $mt={33}>
                <RankTable rows={bills} width={445} cols="103px 100px 189px 1fr" track={115} />
                <Scroll $h={385} />
              </Ranking>
            </Card>
            <Card $h={424.5} $pt={23}>
              <Head title="集團總能耗" />
              <Stats $h={101} $mt={31}>
                <Stat $ws={1.5}>
                  <Label>2024年 ( 同期 )</Label>
                  <ValueRow><Reading><b>6.03</b><span>kWh / 萬元</span></Reading></ValueRow>
                </Stat>
                <Stat $pl={31}>
                  <Label>2025年</Label>
                  <ValueRow><Reading><b>4.69</b><span>kWh / 萬元</span></Reading></ValueRow>
                  <Change $mt={16} $c={C.lime} $fs={14.3}><Arrow $w={13} $down />-43.7%</Change>
                </Stat>
              </Stats>
              <Chart axis={35.5} ticks={[12, 9, 6, 3, 0]} unit="kWh/萬元" color={C.salmon}><TotalPlot /></Chart>
            </Card>
          </Column>
        </Columns>
      </Panel>
    </Page>
  );
}
